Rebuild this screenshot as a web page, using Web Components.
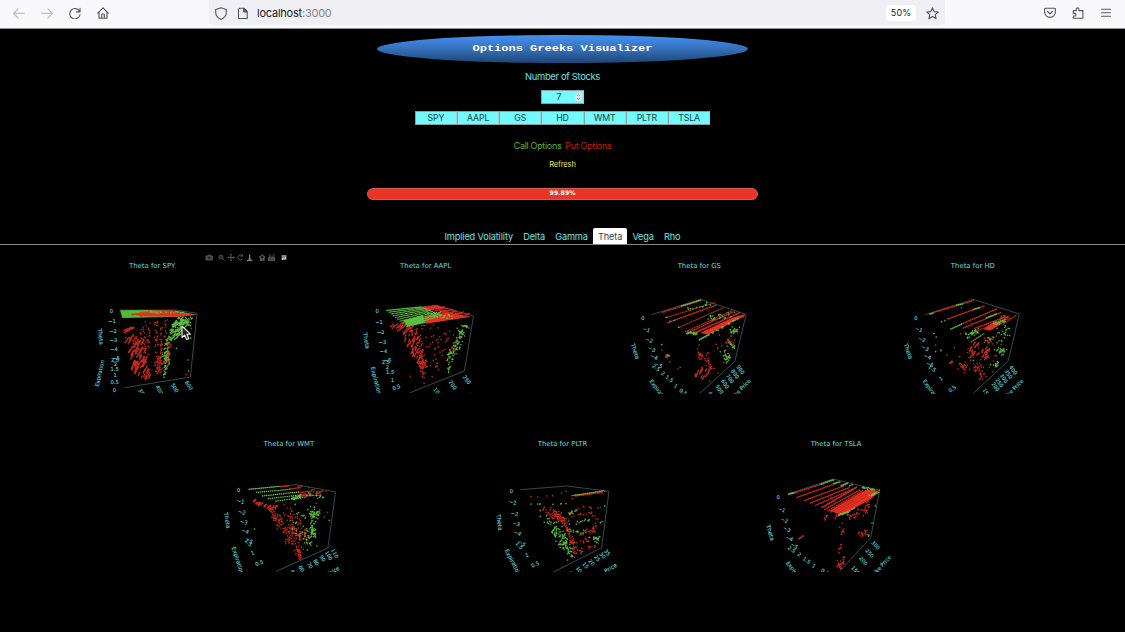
<!DOCTYPE html>
<html lang="en">
<head>
<meta charset="utf-8">
<title>Options Greeks Visualizer</title>
<style>
html,body{margin:0;height:100%;background:#000;overflow:hidden}
body{font-family:Inter,"Liberation Sans",sans-serif;color:#6fe3e1}
</style>
</head>
<body>
<app-window></app-window>
<script>
const define = (name, html, init) => customElements.define(name, class extends HTMLElement {
  connectedCallback() {
    if (this.shadowRoot) return;
    this.attachShadow({mode: 'open'}).innerHTML = html;
    if (init) init(this, this.shadowRoot);
  }
});

/* ---------- browser toolbar ---------- */
define('browser-toolbar', `<style>
:host{display:flex;box-sizing:border-box;height:29px;background:#f9f9fb;border-bottom:1px solid #8b8f8b;color:#55555e;position:relative}
svg{display:block;fill:none;stroke:currentColor;stroke-width:1.1;stroke-linecap:round;stroke-linejoin:round;flex:none}
.nav{display:flex;width:196px;padding:7px 0 0 13px;gap:16px;box-sizing:content-box}
.dim{color:#b4b4ba}
.url{display:flex;align-items:center;box-sizing:border-box;width:736px;height:25px;background:#f0eff4;border-radius:0 0 4px 4px;padding:1px 6px 0 6px;gap:10px}
.addr{font:11px Inter,sans-serif;color:#85858c;flex:1;margin-left:-2px;letter-spacing:-.23px}
.addr b{font-weight:400;color:#17171d}
.zoom{background:#fff;border-radius:3px;width:30px;height:16px;text-align:center;font:9px/16.5px Inter,sans-serif;color:#222;letter-spacing:.1px}
.right{display:flex;gap:16px;padding:7px 0 0 99px}
</style>
<div class="nav">
<svg class="dim" width="12" height="12" viewBox="0 0 12 12"><path d="M11.3 6.3H.8M5 1.8.6 6.3 5 10.8"/></svg>
<svg class="dim" width="12" height="12" viewBox="0 0 12 12"><path d="M.7 6.3h10.5M7 1.8l4.4 4.5L7 10.8"/></svg>
<svg width="12" height="12" viewBox="0 0 12 12"><path d="M10.6 4.500A5.2 5.2 0 1 0 11 7.9M11 1.400v3.5H7.4"/></svg>
<svg width="12" height="12" viewBox="0 0 12 12"><path d="M.7 6.1 6 .9l5.300 5.200M2 5v6.200h8V5M4.700 11V7.600q0-.6.6-.6h1.400q.6 0 .6.6V11"/></svg>
</div>
<div class="url">
<svg width="12" height="13" viewBox="0 0 12 13"><path d="M6 .7 11.300 2.600v3q0 4.600-5.300 6.800Q.7 10.200.7 5.600v-3z"/></svg>
<svg width="12" height="13" viewBox="0 0 12 13"><path d="M2.700 1.200h4.300l3.200 3.200v7.100H1.500V2.200q0-1 1.200-1zM6.800 1.400v3.200H10"/><path d="M6.800 1.300 10 4.600H6.800z" fill="currentColor"/></svg>
<div class="addr"><b>localhost</b>:3000</div>
<div class="zoom">50%</div>
<svg width="13" height="13" viewBox="0 0 13 13"><path d="m6.500.9 1.700 3.700 4 .4-3 2.700.9 4-3.600-2.100-3.600 2.100.9-4-3-2.700 4-.4z"/></svg>
</div>
<div class="right">
<svg width="12" height="12" viewBox="0 0 12 12"><path d="M1.500 1.200h9q.9 0 .9.900V5A5.400 5.400 0 0 1 .6 5V2.100q0-.9.900-.9zM3.500 4.500 6 6.900l2.500-2.400"/></svg>
<svg width="12" height="12" viewBox="0 0 12 12"><path d="M1.300 3.600h3V2.200a1.300 1.300 0 0 1 2.600 0v1.400h4v7.700h-9.600V9h1.400a1.300 1.300 0 0 0 0-2.600H1.300z"/></svg>
<svg width="12" height="12" viewBox="0 0 12 12"><path d="M1.500 2.200h9M1.500 5.700h9M1.500 9.200h9"/></svg>
</div>`);

/* ---------- page header ---------- */
define('app-title', `<style>
:host{display:flex;justify-content:center;align-items:center;width:371px;height:28px;border-radius:50%;background:linear-gradient(#4493f4,#356fba 50%,#1c4676);color:#fff;font:bold 12px "Liberation Mono","Courier New",monospace}
span{transform:scaleY(.82);display:block}
</style><span><slot></slot></span>`);

define('stock-field', `<style>
:host{display:flex;box-sizing:border-box;width:42.200px;height:14px;align-items:center;justify-content:center;background:#73fafc;border:1px solid #8b9d9f;border-right-color:#b5c8c9;color:#174347;font-size:8.800px;line-height:12px;letter-spacing:-.15px}
:host([spin]){width:43px;position:relative;padding-right:7px}
i{display:none;position:absolute;right:1px;top:2px;width:7px;height:8px;background:#e4e4e6;border-radius:1px}
:host([spin]) i{display:block}
svg{display:block;fill:none;stroke:#888;stroke-width:.7}
</style><slot></slot><i><svg width="7" height="8" viewBox="0 0 7 8"><path d="m2 3 1.500-1.500L5 3M2 5l1.500 1.500L5 5"/></svg></i>`);

define('load-progress', `<style>
:host{display:block;box-sizing:border-box;width:391px;height:12px;border-radius:6px;background:#ea3526;border:1px solid #d75a50;color:#fff;text-align:center;font:bold 6.200px/7px "DejaVu Sans",sans-serif}
</style><slot></slot>`);

define('greek-tab', `<style>
:host{display:block;box-sizing:border-box;height:16px;padding:0 5.100px;font-size:9.200px;line-height:18px;white-space:nowrap;border-radius:2px 2px 0 0;letter-spacing:-.14px}
:host([active]){background:#fff;color:#3d4246}
</style><slot></slot>`);

define('greek-tabs', `<style>
:host{display:flex;justify-content:center;align-self:stretch;border-bottom:1px solid #858585}
</style><slot></slot>`);

/* ---------- plotly style mode bar ---------- */
define('mode-bar', `<style>
:host{display:block;position:absolute;left:189.500px;top:7px;width:84px;height:9px}
svg{display:block;fill:none;stroke:#555;stroke-width:1}
</style><svg width="84" height="9" viewBox="0 0 84 9">
<path d="M1 3h1.500l.7-1h2l.7 1h1.500v4h-6.400z" fill="#444"/><circle cx="4.200" cy="5" r="1" stroke="#111" stroke-width=".7"/>
<circle cx="16" cy="4" r="2"/><path d="m17.500 5.500 2 2M15 4h2" />
<path d="M26 1.200v6.600M22.700 4.500h6.600"/><path d="m25 2 1-1 1 1M25 7l1 1 1-1M23.500 3.500l-1 1 1 1M28.500 3.500l1 1-1 1" stroke-width=".6"/>
<path d="M37 2.500a2.500 2.500 0 1 0 .3 3.500M37.500 1.500v1.700h-2"/>
<g stroke="#a5a5a5"><path d="M44.700 1.300v5M42 7.300h5.500M43.500 6h2.500"/></g>
<path d="m54.200 4.500 3-2.500 3 2.500M55.500 4v3.500h1v-2h1.500v2h1V4" stroke-width="1.200"/>
<path d="M63.500 4h6v3.500h-6zM64 2h2M67.500 2h2" fill="#444"/>
<path d="M76.500 2h5v5h-5z" fill="#777" stroke="none"/><path d="M77 6h1M78.500 5.500h1M80 5h1" stroke="#eee" stroke-width="1.500"/><path d="M77 3h4" stroke="#a88"/>
</svg>`);

/* ---------- 3D scatter plots ----------
   Point clouds are described in third-of-a-pixel units:
   q colour n x y ...        random points inside a polygon
   s colour n x1 y1 x2 y2 w  points along a segment, spread w
   k colour n dx dy x y ...  short streaks inside a polygon
   l colour w x y ...        polyline      p colour x y ... filled face
   d colour x y ...          single points t text x y angle size        */
const PLOTS = {
SPY: {o:[80,250], b:430, ops:[
 ['l','a',2,120,180,290,180,352,190,332,381,136,413],
 ['p','g',121,181,205,180,290,182,350,194,300,200,128,204],
 ['p','r',155,192,200,183,230,185,280,186,352,194,300,200,185,199],
 ['s','r',30,205,182,290,184,2],['s','g',35,150,186,330,188,3],['s','r',20,155,193,200,190,3],
 ['k','r',12,14,-6,132,240,145,236,150,240,134,250],['k','r',40,8,-13,133,265,185,260,195,310,195,345,160,350,136,300],
 ['k','r',30,5,-12,150,340,180,340,210,365,212,388,190,395,160,372],['q','r',35,135,260,205,255,210,310,190,340],
 ['s','r',20,210,205,200,335,5],['s','r',26,230,215,230,310,6],['s','r',24,246,204,243,330,4],['s','r',14,258,208,256,290,5],
 ['s','r',55,238,315,237,372,12],['s','r',20,196,205,190,285,12],
 ['q','g',80,270,225,300,200,340,202,330,235,292,250,275,245],['k','g',38,9,-7,268,225,315,205,325,225,292,270,268,270],
 ['s','g',40,270,260,252,325,8],['s','g',55,262,305,258,345,10],['s','g',13,262,345,250,380,5],
 ['q','r',22,262,270,275,270,270,350,250,345],['d','g',325,330,327,363,290,295,253,382,333,264],['d','r',320,374,335,235,325,209,310,200]],
 t:[['0',95,183],['−1',97,213],['−2',100,243],['−3',101,271],['−4',103,298],['−5',109,324],['2.5',106,329],['2',107,343],['1.5',105,357],['1',106,375],['0.5',105,395],['0',104,419],
 ['Theta',63,260,84,17],['Expiration',60,370,-78,16],['300',188,430,55],['400',239,420,65],['500',285,414,60],['600',328,406,58]]},
AAPL: {o:[350,255], b:415, ops:[
 ['l','a',2,110,166,260,151,370,183,343,348,180,413],
 ['p','g',160,196,218,181,228,203,172,216],['p','r',210,157,260,151,280,157,235,168],['p','r',222,185,290,172,362,185,228,206],
 ['k','r',40,10,-3,215,160,262,152,355,180,300,180],['q','r',50,205,160,260,151,360,178,360,187,280,190],
 ['rows','g',110,166,212,156,275,180,170,215,9,26],['q','g',40,230,175,270,168,315,186,310,194,235,185],
 ['q','r',18,270,165,330,180,310,196,260,185],
 ['k','r',20,8,-8,118,215,155,200,190,225,160,242],['k','r',42,3,-7,152,245,192,225,215,265,220,330,200,325],['s','r',50,185,255,220,345,14],
 ['s','r',28,215,320,224,378,8],['q','r',75,170,210,270,205,295,250,275,335,222,350,195,260],['d','r',181,364,246,365,222,385,328,230,265,344,299,229],
 ['s','g',16,338,212,358,216,4],['s','g',75,338,222,305,310,15],['s','g',10,312,280,292,300,3],['s','g',12,295,305,297,355,5],['s','r',10,320,240,290,330,10]],
 t:[['0',81,168],['−1',87,202],['−2',92,231],['−3',97,262],['−4',100,289],['2.5',107,320],['−5',112,316],['2',112,337],['1.5',120,352],['1',128,374],['0.5',139,397,-20],
 ['Theta',49,257,80,17],['Expiration',78,377,76,17],['100',262,412,55],['200',308,390,55],['250',350,374,55]],x:['l','a',2,357,415,363,415]},
GS: {o:[615,255], b:416, ops:[
 ['l','a',2,108,179,255,133,392,178,358,319,252,416],
 ['ll','r',5,140,172,255,137],['ll','g',5,198,153,255,135],['ll','r',4,150,188,298,143],['ll','r',5,157,203,300,151],['ll','r',4,188,218,322,159],['ll','r',5,220,232,350,172],['ll','r',6,235,235,370,174],['p','r',255,233,350,188,388,177,387,184,277,239],
 ['ll','r',4,210,230,350,167],['s','g',12,215,162,292,148,6],['s','g',25,280,190,350,180,11],['s','g',25,212,233,250,238,6],['ll','g',6,252,254,280,239],['s','g',20,280,240,370,188,5],['d','g',153,187,164,199,176,196,190,217,274,143,139,269,372,217],
 ['s','g',26,350,235,362,225,12],['s','g',20,338,258,358,280,4],['s','g',30,325,290,340,315,13],['s','r',22,250,292,258,310,8],['s','r',20,270,300,288,345,9],['k','r',13,5,-10,225,370,245,345,288,335,270,380],
 ['d','r',139,285,187,342,194,337,163,320,246,282,251,270,276,295,302,268,319,273,283,378,308,354,325,322,340,296,312,240],['s','r',15,310,285,345,250,20],['s','r',8,150,306,160,300,5],['s','g',5,150,306,160,300,5]],
 t:[['0',82,189],['−1',93,224,20],['−2',101,255,20],['−3',109,282,25],['−4',116,306,25],['−5',130,330,25],['2.5',122,338,35],['2',143,355,35],['1.5',162,371,35],['1',181,393,35],['0.5',203,411,35],
 ['Theta',59,289,72,17],['Expiration',130,408,54,16],['Strike Price',371,407,-45,16],['400',290,424,55],['500',312,403,55],['600',329,387,55],['700',344,371,55],['800',359,357,55],['900',375,344,55]]},
HD: {o:[890,255], b:416, ops:[
 ['l','a',2,106,179,250,133,388,177,355,318,250,415],
 ['ll','r',5,135,171,250,137],['s','g',8,120,177,135,173,1],['ll','g',5,200,151,217,147],['ll','r',5,173,192,282,153],['s','g',9,245,164,272,157,2],['ll','r',5,220,219,332,173],['ll','r',5,215,207,320,162],['ll','g',5,183,222,215,208],['ll','g',5,290,188,320,176],['p','r',280,222,305,205,325,199,340,203,300,227],
 ['ll','r',5,255,220,335,190],['ll','r',4,260,228,360,190],['s','r',24,335,188,356,184,9],['ll','r',4,340,208,378,181],['s','g',28,315,205,350,196,8],['s','g',35,230,242,265,228,10],['ll','g',4,245,260,282,236],
 ['k','r',11,6,-10,220,310,250,270,265,270,245,315],['k','r',16,6,-7,260,300,285,280,300,285,285,315],['s','r',22,215,340,227,328,12],['s','r',18,250,345,275,325,16],['s','r',12,268,378,280,355,10],['s','r',9,180,328,190,315,3],['d','r',215,158,212,236,137,270,153,288,171,300,193,278,209,305,320,243,288,365,308,350],
 ['s','r',15,282,250,330,270,13],['q','g',22,320,220,362,205,360,260,318,265],['s','g',26,325,285,343,290,12],['s','g',15,315,330,330,320,8],['d','g',155,200,165,197,132,236,139,246,137,290,153,285,250,316,210,326,302,329],['s','g',8,282,262,310,245,8],['q','r',25,230,270,330,265,310,345,220,355]],
 t:[['0',78,189],['−1',87,223,20],['−2',96,253,20],['−3',106,279,25],['−4',113,305,25],['−5',120,328,25],['1.5',127,340,35],['1',153,371,-25],['0.5',187,402,-35],
 ['Theta',55,289,72,17],['Expiration',126,408,54,16],['Strike Price',366,407,-45,16],['150',290,414,55],['200',317,395,55],['250',329,383,55],['300',342,370,55],['350',356,357,55],['400',370,345,55]]},
WMT: {o:[210,435], b:411, ops:[
 ['l','a',2,115,163,260,149,377,171,354,339,199,409],
 ['ll','g',4,118,163,210,154],['ll','r',5,213,155,235,153],['dd','g',20,140,172,240,163,18],['ll','r',5,240,162,270,158],['dd','g',20,158,183,265,171,20],['dd','g',20,175,191,270,180,16],['dd','g',20,198,198,285,187,14],['ll','r',5,262,183,328,181],['ll','r',5,265,173,305,168],['s','r',40,265,183,330,174,7],['s','r',10,250,150,355,172,4],['s','g',26,245,192,275,182,6],['s','g',15,290,175,345,188,10],
 ['k','r',20,7,-6,122,193,145,203,200,218,180,232,155,222],['s','r',50,180,217,220,270,14],['s','r',50,230,285,285,310,22],['s','r',26,210,265,265,320,22],['s','r',25,235,315,270,350,14],['s','r',25,265,345,273,370,7],['q','r',45,215,205,260,225,290,290,240,320],
 ['s','g',28,305,240,330,235,14],['s','g',50,315,220,300,325,18],['s','g',28,305,275,309,298,8],['q','g',28,240,225,300,220,290,335,240,290],['d','g',134,282,358,256,321,333,292,345,256,208],['d','r',343,246,353,232,200,198,319,205,305,235,286,283]],
 t:[['0',86,165],['−1',92,199,12],['−2',96,231,12],['−3',102,261,12],['−4',106,288,20],['−5',118,315,40],['1.5',116,323,50],['1',128,354,-20],['0.5',148,384,-20],
 ['Theta',52,256,80,17],['Expiration',84,377,72,17],['Strike Price',348,421,-30,16],['40',251,413,60],['60',275,401,60],['70',300,391,60],['80',319,382,60],['90',338,370,60],['100',357,362,60],['110',375,355,60]]},
PLTR: {o:[480,435], b:411, ops:[
 ['l','a',2,121,164,260,153,386,169,364,338,222,410],
 ['ll','r',7,285,182,365,171],['ll','g',4,275,182,370,167],['d','r',152,184,172,186,200,183,217,182,244,174,257,169,276,191,178,207,192,217,242,207,373,169],['d','g',152,207,172,207,180,207,180,227,180,244,192,262,207,259,218,208,242,206,257,206,373,213],
 ['s','r',60,220,238,255,256,14],['s','r',25,195,225,235,237,14],['s','r',40,250,255,278,325,7],['s','r',18,278,320,282,368,8],['s','r',9,265,235,315,212,3],['s','r',7,320,220,365,215,4],['s','r',12,270,245,340,231,4],
 ['s','g',80,222,275,255,335,20],['s','g',28,255,325,275,365,14],['s','g',12,250,252,290,223,5],['s','g',14,260,285,320,297,4],['s','g',12,270,267,325,255,5],['s','g',22,342,318,355,306,11],['s','g',8,192,250,230,270,14],
 ['s','r',20,345,240,340,300,10],['s','r',16,280,350,350,335,12],['s','r',14,290,325,350,310,14],['s','r',12,300,295,345,280,12],['d','g',360,263,365,260,310,285,262,375,302,354,327,307]],
 t:[['0',93,167],['−1',98,202,12],['−2',103,236,12],['−3',108,266,15],['−4',111,294,20],['−5',125,324,40],['1.5',117,331,50],['1',140,360,-15],['0.5',165,388,-25],
 ['Theta',57,262,82,17],['Expiration',98,381,62,17],['Price',391,399,-30,17],['10',296,404,50],['15',316,391,50],['20',334,383,50],['25',351,370,50],['30',367,362,50],['35',381,353,50]],x:['l','a',2,270,410,276,410]},
TSLA: {o:[750,435], b:411, ops:[
 ['l','a',2,115,177,250,132,390,166,363,308,270,409],
 ['ll','g',6,118,177,135,173],['ll','r',5,135,173,215,148],['ll','g',6,215,147,250,135],['ll','r',5,143,187,252,148],['ll','g',6,253,146,270,141],['ll','r',5,165,196,280,154],['ll','g',6,275,152,293,145],['ll','r',5,182,204,298,158],['ll','r',5,198,211,310,162],['ll','g',5,300,153,308,149],['ll','r',6,218,217,320,157],['ll','r',5,226,223,330,165],['ll','r',5,235,228,338,167],['ll','r',5,244,231,348,169],
 ['p','r',240,228,330,175,352,164,388,167,365,191,278,240],['l','k',1,248,230,335,178],['l','k',1,254,232,350,177],['l','k',1,262,236,350,184],
 ['s','g',25,335,157,375,165,4],['s','g',20,362,183,383,172,5],['ll','g',7,268,240,295,231],['s','g',5,295,231,315,218,2],
 ['s','r',8,230,240,222,260,4],['s','r',5,262,240,257,253,3],['s','r',10,295,240,302,252,8],['s','r',14,310,245,330,225,10],['s','r',20,343,238,355,210,9],['ll','r',6,148,311,160,303],['s','r',9,273,302,283,285,4],['s','r',10,325,290,355,294,10],['s','r',9,337,305,350,285,8],['s','r',8,267,355,274,325,4],['s','r',30,268,398,283,365,11],['d','r',277,265,340,226,356,198,270,277,244,187],['d','g',377,213,367,264,356,304,358,300,389,165]],
 t:[['0',85,187],['−1',96,224,20],['−2',104,255,20],['−3',112,282,25],['−4',119,310,25],['−5',134,332,35],['2.5',126,343,35],['2',149,358,35],['1.5',171,376,35],['1',193,393,35],['0.5',226,411,35],
 ['Theta',62,293,73,17],['Expiration',138,413,52,16],['Strike Price',391,397,-48,16],['100',296,424,50],['150',318,406,50],['200',341,378,50],['250',360,355,50],['300',378,331,50]]}
};

function rng(seed) { let a = seed; const f = () => { a = (a + 0x6D2B79F5) | 0; let t = Math.imul(a ^ a >>> 15, 1 | a); t = t + Math.imul(t ^ t >>> 7, 61 | t) ^ t; return ((t ^ t >>> 14) >>> 0) / 4294967296; }; return f; }

function drawCloud(ops, seed) {
  const rnd = rng(seed), col = {r:'#d92c20', g:'#62c846', a:'#4c7073', k:'#8a1a12'};
  const bell = () => rnd() + rnd() - 1;
  const dot = (x, y) => `M${x.toFixed(1)} ${y.toFixed(1)}h.1`;
  const pairs = a => { const r = []; for (let i = 0; i < a.length; i += 2) r.push([a[i], a[i+1]]); return r; };
  const inside = (x, y, p) => { let c = false; for (let i = 0, j = p.length - 1; i < p.length; j = i++) if ((p[i][1] > y) !== (p[j][1] > y) && x < (p[j][0]-p[i][0])*(y-p[i][1])/(p[j][1]-p[i][1])+p[i][0]) c = !c; return c; };
  const pick = p => { const xs = p.map(v => v[0]), ys = p.map(v => v[1]), x0 = Math.min(...xs), x1 = Math.max(...xs), y0 = Math.min(...ys), y1 = Math.max(...ys); let x, y, n = 0; do { x = x0 + rnd()*(x1-x0); y = y0 + rnd()*(y1-y0); } while (!inside(x, y, p) && n++ < 400); return [x, y]; };
  const stroke = (c, d, w = 4.8, o = .88) => `<path d="${d}" stroke="${col[c]}" stroke-width="${w}" stroke-opacity="${o}"/>`;
  let out = '';
  for (const [op, c, ...a] of ops) {
    let d = '';
    if (op === 'l') out += stroke(c, 'M' + a.slice(1).join(' '), a[0], 1);
    else if (op === 'p') out += `<path d="M${a.join(' ')}z" fill="${c === 'r' ? '#e43022' : '#55b83b'}" stroke="none"/>`;
    else if (op === 'll') {
      out += stroke(c, 'M' + a.slice(1).join(' '), a[0] * .65, .7);
      const [w, x1, y1, x2, y2] = a, n = Math.round(Math.hypot(x2-x1, y2-y1) / 6);
      for (let i = 0; i <= n; i++) d += dot(x1+(x2-x1)*i/n, y1+(y2-y1)*i/n+(rnd()-.5)*1.2);
      out += stroke(c, d, w * .92, .8);
    } else if (op === 'dd') {
      const [, x1, y1, x2, y2, n] = a;
      for (let i = 0; i < n; i++) d += dot(x1+(x2-x1)*i/(n-1), y1+(y2-y1)*i/(n-1));
      out += stroke(c, d, 4.6, 1);
    } else if (op === 'rows') {
      const [ax, ay, bx, by, cx, cy, dx, dy, rows, n] = a;
      for (let j = 0; j <= rows; j++) for (let i = 0; i <= n; i++) { const u = i/n, v = j/rows; d += dot(ax*(1-u)*(1-v)+bx*u*(1-v)+cx*u*v+dx*(1-u)*v, ay*(1-u)*(1-v)+by*u*(1-v)+cy*u*v+dy*(1-u)*v); }
      out += stroke(c, d, 3.9, 1);
    } else if (op === 'q') { const n = a[0], p = pairs(a.slice(1)); for (let i = 0; i < n; i++) d += dot(...pick(p)); out += stroke(c, d); }
    else if (op === 's') {
      const [n, x1, y1, x2, y2, w] = a;
      for (let i = 0; i < n; i++) { const u = rnd(); d += dot(x1+(x2-x1)*u+bell()*w*1.15, y1+(y2-y1)*u+bell()*w); }
      out += stroke(c, d);
    } else if (op === 'k') {
      const [n, dx, dy, ...rest] = a, p = pairs(rest);
      for (let i = 0; i < n; i++) { const [x, y] = pick(p), f = .5 + rnd()*.7; d += `M${x.toFixed(1)} ${y.toFixed(1)}l${(dx*f).toFixed(1)} ${(dy*f).toFixed(1)}`; }
      out += stroke(c, d, 4);
    } else if (op === 'd') { for (const [x, y] of pairs(a)) d += dot(x, y); out += stroke(c, d, 5); }
  }
  return out;
}

define('greek-plot', `<style>
:host{display:block;position:relative;width:273.600px;height:178px}
.t{height:12px;padding-top:14px;text-align:center;font:6.900px/12px "DejaVu Sans",sans-serif;color:#6bdcda}
.scene{display:block;height:152px}
svg{display:block;width:273.600px;height:152px;overflow:hidden}
text{font-family:"DejaVu Sans",sans-serif;fill:#66cfd0;stroke:#66cfd0;stroke-width:.35;text-anchor:middle}
</style><div class="t"></div><div class="scene"></div><slot></slot>`, (el, root) => {
  const name = el.getAttribute('symbol'), p = PLOTS[name];
  const cx = +el.getAttribute('cx'), top = +el.getAttribute('top') + 26;
  root.querySelector('.t').textContent = 'Theta for ' + name;
  const labels = p.t.map(([s, x, y, r = 0, z = 15.5]) => `<text x="${x}" y="${y}" dy=".36em" font-size="${z}" transform="rotate(${r} ${x} ${y})">${s}</text>`).join('');
  const ops = p.x ? [...p.ops, p.x] : p.ops;
  root.querySelector('.scene').innerHTML = `<svg viewBox="${cx-136.8} ${top} 273.6 152"><defs><clipPath id="c"><rect x="0" y="0" width="480" height="${p.b}"/></clipPath></defs>
  <g transform="translate(${p.o[0]} ${p.o[1]}) scale(.33333)" clip-path="url(#c)" fill="none" stroke-linecap="round" stroke-linejoin="round">${drawCloud(ops, name.charCodeAt(0)*977+name.length)}<g>${labels}</g></g></svg>`;
});

define('mouse-pointer', `<style>:host{display:block;position:absolute;left:165.500px;top:79px}svg{display:block}</style>
<svg width="12" height="17" viewBox="0 0 12 17"><path d="M1 1v11.500l2.700-2.400 1.900 4.500 2.200-.9-1.900-4.400h3.700z" fill="#222" stroke="#eee" stroke-width="1.100" stroke-linejoin="round"/></svg>`);

define('plot-row', `<style>:host{display:flex;justify-content:center;height:178px}</style><slot></slot>`);

define('app-window', `<style>
:host{display:block;height:632px;background:#000;overflow:hidden}
main{display:flex;flex-direction:column;align-items:center;padding-top:6px}
.label{font-size:9.400px;line-height:12px;margin:8px 0 6.500px;letter-spacing:-.32px}
.row{display:flex}
.tick{margin-top:7px}
.kinds{gap:4px;font-size:9px;line-height:12px;margin-top:15.500px;letter-spacing:-.32px}
.call{color:#55ad3b}.put{color:#bd2117}
.refresh{color:#e2e05a;font-size:7.500px;line-height:10px;margin:8px 0 18px;letter-spacing:-.12px}
greek-tabs{margin-top:28px}
section{padding-top:1px}
</style>
<browser-toolbar></browser-toolbar>
<main>
<app-title>Options Greeks Visualizer</app-title>
<div class="label">Number of Stocks</div>
<stock-field spin>7</stock-field>
<div class="row tick"><stock-field>SPY</stock-field><stock-field>AAPL</stock-field><stock-field>GS</stock-field><stock-field>HD</stock-field><stock-field>WMT</stock-field><stock-field>PLTR</stock-field><stock-field>TSLA</stock-field></div>
<div class="row kinds"><span class="call">Call Options</span><span class="put">Put Options</span></div>
<div class="refresh">Refresh</div>
<load-progress>99.89%</load-progress>
<greek-tabs><greek-tab>Implied Volatility</greek-tab><greek-tab>Delta</greek-tab><greek-tab>Gamma</greek-tab><greek-tab active>Theta</greek-tab><greek-tab>Vega</greek-tab><greek-tab>Rho</greek-tab></greek-tabs>
</main>
<section>
<plot-row><greek-plot symbol="SPY" cx="152.1" top="246"><mode-bar></mode-bar><mouse-pointer></mouse-pointer></greek-plot><greek-plot symbol="AAPL" cx="425.7" top="246"></greek-plot><greek-plot symbol="GS" cx="699.3" top="246"></greek-plot><greek-plot symbol="HD" cx="972.9" top="246"></greek-plot></plot-row>
<plot-row><greek-plot symbol="WMT" cx="288.9" top="424"></greek-plot><greek-plot symbol="PLTR" cx="562.5" top="424"></greek-plot><greek-plot symbol="TSLA" cx="836.1" top="424"></greek-plot></plot-row>
</section>`);
</script>
</body>
</html>
